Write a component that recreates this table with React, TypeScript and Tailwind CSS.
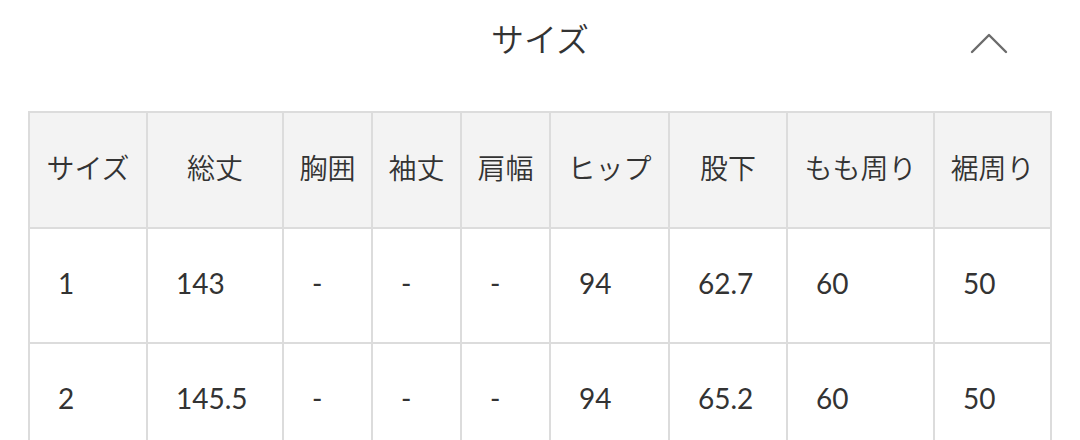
const headers = ["サイズ", "総丈", "胸囲", "袖丈", "肩幅", "ヒップ", "股下", "もも周り", "裾周り"];
const widths = [118, 136, 89, 89, 89, 119, 118, 147, 117];

const rows = [
  ["1", "143", "-", "-", "-", "94", "62.7", "60", "50"],
  ["2", "145.5", "-", "-", "-", "94", "65.2", "60", "50"],
];

function ChevronUp() {
  return (
    <svg width="38" height="22" viewBox="0 0 38 22" fill="none">
      <path d="M2 20 L19 3 L36 20" stroke="#6b6b6b" strokeWidth="2.4" strokeLinecap="round" strokeLinejoin="round" />
    </svg>
  );
}

export default function App() {
  return (
    <div
      className="w-[1080px] h-[440px] overflow-hidden bg-white text-[#333]"
      style={{ fontFamily: "Lato, 'Noto Sans CJK JP', sans-serif" }}
    >
      <div className="relative h-[111px] flex justify-center pt-[16px]">
        <h2 className="text-[33px] leading-[46px] font-[350]">サイズ</h2>
        <div className="absolute right-[72px] top-[32px]">
          <ChevronUp />
        </div>
      </div>

      <div className="pl-[28px]">
        <table className="table-fixed border-collapse w-[1022px]">
          <colgroup>
            {widths.map((w, i) => (
              <col key={i} style={{ width: w }} />
            ))}
          </colgroup>
          <thead>
            <tr className="h-[116px]">
              {headers.map((h) => (
                <th
                  key={h}
                  className="border-2 border-[#dcdcdc] bg-[#f3f3f3] font-[350] text-[28px] text-center px-0 pb-[4px]"
                >
                  {h}
                </th>
              ))}
            </tr>
          </thead>
          <tbody>
            {rows.map((r, ri) => (
              <tr key={ri} className="h-[115px]">
                {r.map((c, ci) => (
                  <td
                    key={ci}
                    className="border-2 border-[#dcdcdc] text-[28px] text-left pl-[28px] pb-[5px]"
                  >
                    {c}
                  </td>
                ))}
              </tr>
            ))}
          </tbody>
        </table>
      </div>
    </div>
  );
}
